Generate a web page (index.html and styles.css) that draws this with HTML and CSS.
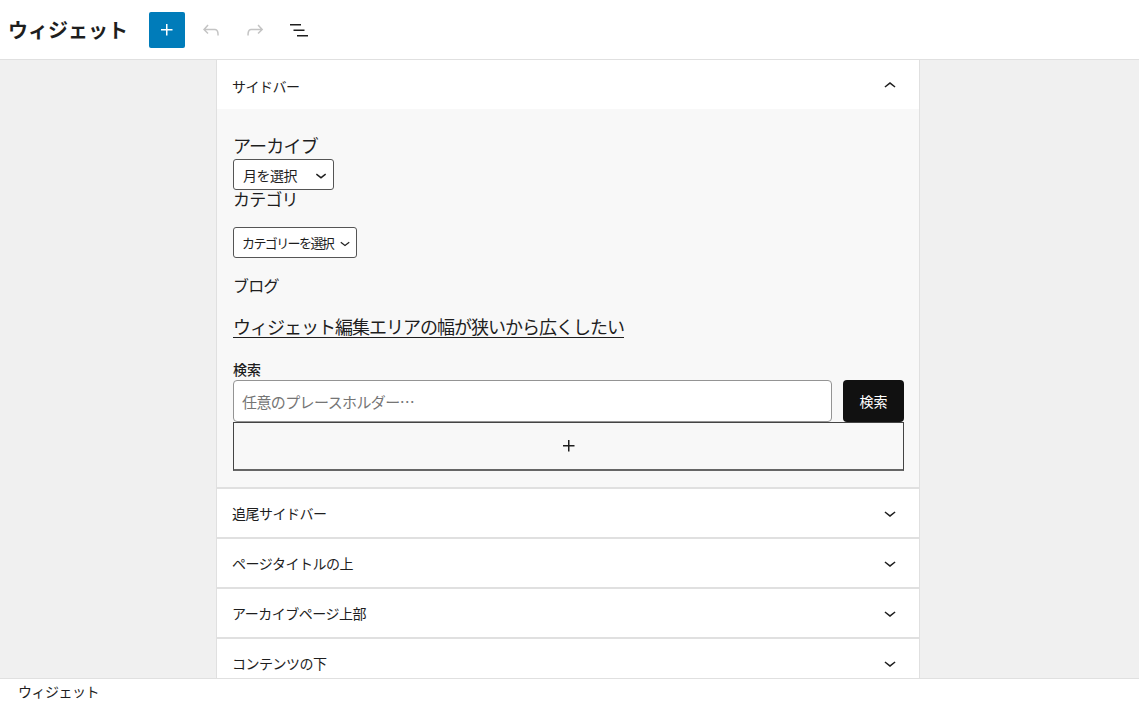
FILE: index.html
```html
<!DOCTYPE html>
<html lang="ja">
<head>
    <meta charset="UTF-8">
    <meta name="viewport" content="width=device-width, initial-scale=1.0">
    <title>ウィジェット</title>
    <link rel="stylesheet" href="styles.css">
</head>
<body>
    <header class="topbar">
        <h1 class="title">ウィジェット</h1>
        <div class="tools">
            <button class="tool add">
                <svg viewBox="0 0 24 24" width="24" height="24"><path d="M11 12.5V17.5H12.5V12.5H17.5V11H12.5V6H11V11H6V12.5H11Z"/></svg>
            </button>
            <button class="tool off">
                <svg viewBox="0 0 24 24" width="24" height="24"><path d="M18.3 11.7c-.6-.6-1.4-.9-2.3-.9H6.7l2.9-3.3-1.1-1-4.5 5L8.5 16l1-1-2.7-2.7H16c.5 0 .9.2 1.3.5 1 1 1 3.4 1 4.5v.3h1.5v-.2c0-1.5 0-4.3-1.5-5.7z"/></svg>
            </button>
            <button class="tool off">
                <svg viewBox="0 0 24 24" width="24" height="24"><path d="M15.6 6.5l-1.1 1 2.9 3.3H8c-.9 0-1.7.3-2.3.9-1.4 1.5-1.4 4.2-1.4 5.6v.2h1.5v-.3c0-1.1 0-3.5 1-4.5.3-.3.7-.5 1.300-.5h9.2L14.5 15l1.1 1.1 4.6-4.6-4.6-5z"/></svg>
            </button>
            <button class="tool">
                <svg viewBox="0 0 24 24" width="24" height="24"><path d="M3 6h11v1.5H3V6Zm3.5 5.5h11V13h-11v-1.5ZM21 17H10v1.5h11V17Z"/></svg>
            </button>
        </div>
    </header>

    <main class="canvas">
        <div class="areas">
            <section class="area open">
                <div class="area-head">
                    <span>サイドバー</span>
                    <svg viewBox="0 0 24 24" width="24" height="24"><path d="M6.5 12.4L12 8l5.5 4.4-.9 1.2L12 10l-4.6 3.6-1-1.2z"/></svg>
                </div>
                <div class="area-body">
                    <h2 class="widget-title">アーカイブ</h2>
                    <div class="select small"><span>月を選択</span>
                        <svg viewBox="0 0 24 24" width="22" height="22"><path d="M17.5 11.6L12 16l-5.5-4.4.9-1.2L12 14l4.6-3.6 1 1.2z"/></svg>
                    </div>
                    <h2 class="widget-title cat">カテゴリ</h2>
                    <div class="select wide"><span>カテゴリーを選択</span>
                        <svg viewBox="0 0 24 24" width="20" height="20"><path d="M17.5 11.6L12 16l-5.5-4.4.9-1.2L12 14l4.6-3.6 1 1.2z"/></svg>
                    </div>
                    <p class="blog">ブログ</p>
                    <a class="post-link" href="#">ウィジェット編集エリアの幅が狭いから広くしたい</a>
                    <label class="search-label">検索</label>
                    <div class="search-row">
                        <div class="search-input">任意のプレースホルダー…</div>
                        <button class="search-btn">検索</button>
                    </div>
                    <div class="appender">
                        <svg viewBox="0 0 24 24" width="24" height="24"><path d="M11 12.5V17.5H12.5V12.5H17.5V11H12.5V6H11V11H6V12.5H11Z"/></svg>
                    </div>
                </div>
            </section>
            <section class="area">
                <div class="area-head">
                    <span>追尾サイドバー</span>
                    <svg viewBox="0 0 24 24" width="24" height="24"><path d="M17.5 11.6L12 16l-5.5-4.4.9-1.2L12 14l4.6-3.6 1 1.2z"/></svg>
                </div>
            </section>
            <section class="area">
                <div class="area-head">
                    <span>ページタイトルの上</span>
                    <svg viewBox="0 0 24 24" width="24" height="24"><path d="M17.5 11.6L12 16l-5.5-4.4.9-1.2L12 14l4.6-3.6 1 1.2z"/></svg>
                </div>
            </section>
            <section class="area">
                <div class="area-head">
                    <span>アーカイブページ上部</span>
                    <svg viewBox="0 0 24 24" width="24" height="24"><path d="M17.5 11.6L12 16l-5.5-4.4.9-1.2L12 14l4.6-3.6 1 1.2z"/></svg>
                </div>
            </section>
            <section class="area">
                <div class="area-head">
                    <span>コンテンツの下</span>
                    <svg viewBox="0 0 24 24" width="24" height="24"><path d="M17.5 11.6L12 16l-5.5-4.4.9-1.2L12 14l4.6-3.6 1 1.2z"/></svg>
                </div>
            </section>
        </div>
    </main>

    <footer class="footer">ウィジェット</footer>
</body>
</html>
```

FILE: styles.css
```css
* {
    box-sizing: border-box;
}

body {
    margin: 0;
    height: 703px;
    display: flex;
    flex-direction: column;
    font-family: "Noto Sans CJK JP", "Noto Sans", sans-serif;
    color: #1e1e1e;
    background: #fff;
    overflow: hidden;
}

.topbar {
    height: 60px;
    flex: none;
    display: flex;
    align-items: center;
    padding-left: 8px;
    border-bottom: 1px solid #e0e0e0;
    background: #fff;
}

.title {
    margin: 0 21px 0 0;
    font-size: 20px;
    font-weight: 700;
    line-height: 1;
}

.tools {
    display: flex;
    gap: 8px;
    padding-top: 1px;
}

.tool {
    width: 36px;
    height: 36px;
    border: none;
    border-radius: 2px;
    background: transparent;
    display: flex;
    align-items: center;
    justify-content: center;
    padding: 0;
    fill: #1e1e1e;
}

.tool.add {
    background: #007cba;
    fill: #fff;
}

.tool.off {
    fill: #c4c4c4;
}

.canvas {
    flex: 1;
    background: #f0f0f0;
    overflow: hidden;
}

.areas {
    width: 704px;
    margin: 0 auto 0 216px;
    background: #fff;
}

.area {
    border-left: 1px solid #e0e0e0;
    border-right: 1px solid #e0e0e0;
    border-bottom: 2px solid #e0e0e0;
}

.area-head {
    height: 48px;
    display: flex;
    align-items: center;
    justify-content: space-between;
    padding: 0 17px 0 15px;
    font-size: 14px;
    letter-spacing: -0.5px;
    fill: #1e1e1e;
}

.area.open .area-head {
    height: 49px;
    padding-top: 2px;
}

.area-body {
    background: #f8f8f8;
    padding: 23px 15px 16px 16px;
}

.widget-title {
    margin: 0;
    font-size: 18px;
    font-weight: 400;
    line-height: 27px;
    letter-spacing: -0.8px;
}

.widget-title.cat {
    line-height: 18px;
    font-size: 17px;
}

.select {
    display: flex;
    align-items: center;
    justify-content: space-between;
    height: 31px;
    border: 1px solid #555;
    border-radius: 3px;
    background: #fff;
    font-size: 14px;
    padding: 0 1px 0 9px;
    fill: #1e1e1e;
    white-space: nowrap;
}

.select.small {
    width: 101px;
    letter-spacing: -0.5px;
}

.select.wide {
    width: 124px;
    margin-top: 19px;
    padding-left: 8px;
    font-size: 13px;
    letter-spacing: -1.6px;
}

.blog {
    margin: 17px 0 0;
    font-size: 16px;
    line-height: 20px;
    letter-spacing: -0.8px;
}

.post-link {
    display: inline-block;
    margin-top: 19px;
    font-size: 18px;
    line-height: 24px;
    letter-spacing: -1px;
    color: #1e1e1e;
    text-decoration: underline;
    text-underline-offset: 3px;
}

.search-label {
    display: block;
    margin-top: 22px;
    font-size: 14px;
    font-weight: 500;
    line-height: 16px;
}

.search-row {
    display: flex;
    gap: 11px;
    margin-top: 3px;
}

.search-input {
    flex: 1;
    height: 42px;
    border: 1px solid #949494;
    border-radius: 4px;
    background: #fff;
    display: flex;
    align-items: center;
    padding-left: 8px;
    font-size: 15px;
    letter-spacing: -0.6px;
    color: #757575;
}

.search-btn {
    width: 61px;
    height: 42px;
    border: none;
    border-radius: 4px;
    background: #111;
    color: #fff;
    font-family: inherit;
    font-size: 14px;
    padding: 0;
}

.appender {
    height: 49px;
    border: 1px solid #444;
    border-bottom: 2px solid #666;
    display: flex;
    align-items: center;
    justify-content: center;
    fill: #1e1e1e;
}

.footer {
    height: 25px;
    flex: none;
    border-top: 1px solid #e0e0e0;
    padding-left: 18px;
    font-size: 14px;
    line-height: 24px;
    letter-spacing: -0.5px;
    background: #fff;
}
```
